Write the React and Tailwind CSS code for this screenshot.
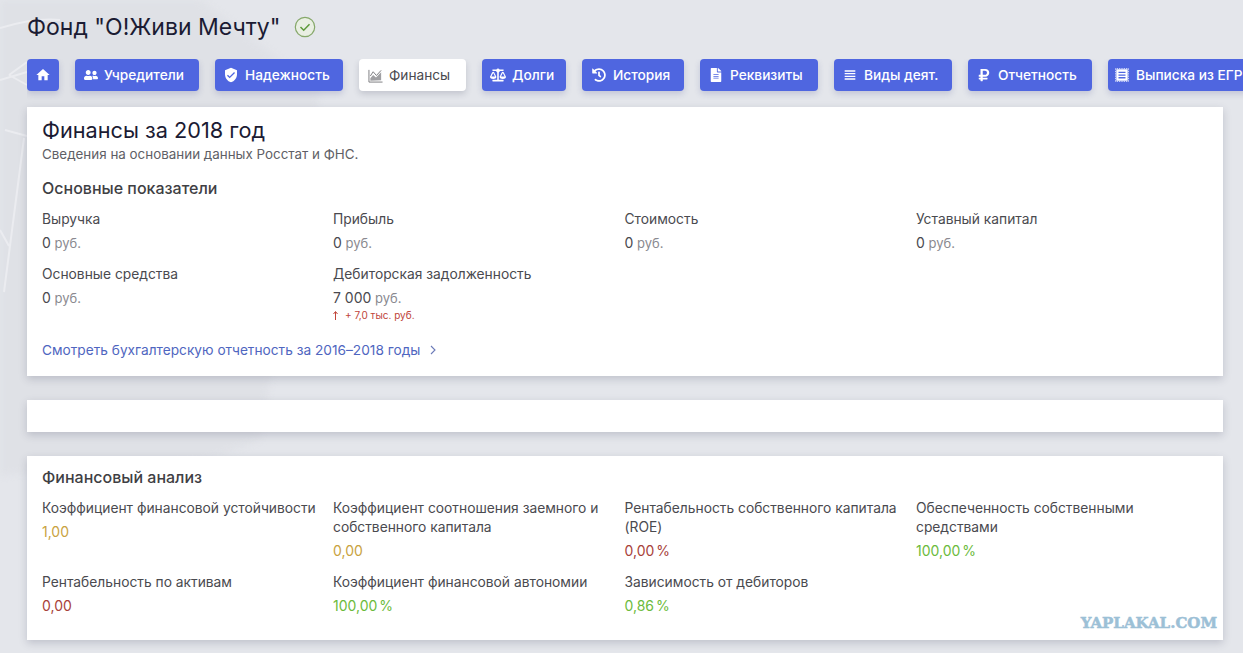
import { FaBalanceScale, FaFileAlt, FaHistory, FaRubleSign, FaUserFriends } from 'react-icons/fa'
import { MdHome, MdVerifiedUser, MdViewHeadline } from 'react-icons/md'

function ChartIcon() {
  return (
    <svg viewBox="0 0 16 16" className="w-[15px] h-[15px] text-[#77777c]" fill="none" stroke="currentColor">
      <path d="M1 2v13h14.500" strokeWidth="1" />
      <path d="M2.500 13.500V11l3-3.500 3 2.500 5.500-5.500v8.500z" fill="currentColor" fillOpacity="0.7" stroke="none" />
      <path d="M2.500 8.500l3-4.500 3.500 4 5-5.500" strokeWidth="1" />
    </svg>
  )
}

function ReceiptIcon() {
  return (
    <svg viewBox="0 0 16 16" className="w-[14px] h-[14px]" fill="currentColor">
      <rect x="0.500" y="0.500" width="15" height="15" fill="none" stroke="currentColor" strokeDasharray="1 1" />
      <path d="M1.500 1.500h13v13h-13zM4 4.200v1.500h8V4.200zm0 3.100v1.500h8V7.300zm0 3.100v1.500h8v-1.500z" fillRule="evenodd" />
    </svg>
  )
}

const tabs = [
  { label: 'Учредители', icon: <FaUserFriends className="w-[14px] h-[14px]" />, box: 'w-[124px] pl-[9px] gap-[6px]' },
  { label: 'Надежность', icon: <MdVerifiedUser className="w-4 h-4" />, box: 'w-[128px] pl-[8px] gap-[6px]' },
  { label: 'Финансы', icon: <ChartIcon />, active: true, box: 'w-[107px] pl-[9px] gap-[6px]' },
  { label: 'Долги', icon: <FaBalanceScale className="w-4 h-4" />, box: 'w-[84px] pl-[8px] gap-[6px]' },
  { label: 'История', icon: <FaHistory className="w-[14px] h-[14px]" />, box: 'w-[102px] pl-[10px] gap-[7px]' },
  { label: 'Реквизиты', icon: <FaFileAlt className="w-[12px] h-[14px]" />, box: 'w-[118px] pl-[10px] gap-[8px]' },
  { label: 'Виды деят.', icon: <MdViewHeadline className="w-4 h-4" />, box: 'w-[118px] pl-[8px] gap-[6px]' },
  { label: 'Отчетность', icon: <FaRubleSign className="w-[12px] h-[14px]" />, box: 'w-[124px] pl-[10px] gap-[8px]' },
  { label: 'Выписка из ЕГРЮЛ', icon: <ReceiptIcon />, box: 'w-[170px] pl-[7px] gap-[7px]' },
]

const mainStats = [
  { title: 'Выручка', value: '0' },
  { title: 'Прибыль', value: '0' },
  { title: 'Стоимость', value: '0' },
  { title: 'Уставный капитал', value: '0' },
  { title: 'Основные средства', value: '0' },
  { title: 'Дебиторская задолженность', value: '7 000', delta: '+ 7,0 тыс. руб.' },
]

const analysis = [
  { title: 'Коэффициент финансовой устойчивости', value: '1,00', color: 'text-[#c9a33f]' },
  { title: 'Коэффициент соотношения заемного и собственного капитала', value: '0,00', color: 'text-[#c9a33f]' },
  { title: 'Рентабельность собственного капитала (ROE)', value: '0,00 %', color: 'text-[#a8423a]' },
  { title: 'Обеспеченность собственными средствами', value: '100,00 %', color: 'text-[#6cbb3c]' },
  { title: 'Рентабельность по активам', value: '0,00', color: 'text-[#a8423a]' },
  { title: 'Коэффициент финансовой автономии', value: '100,00 %', color: 'text-[#6cbb3c]' },
  { title: 'Зависимость от дебиторов', value: '0,86 %', color: 'text-[#6cbb3c]' },
]

function Card({ className, children }) {
  return (
    <div className={`bg-white shadow-[0_3px_8px_rgba(60,64,90,0.22)] ${className}`}>{children}</div>
  )
}

export default function App() {
  return (
    <div className="relative w-[1243px] h-[653px] overflow-hidden bg-[#e4e6eb] text-[13.800px] text-[#4a4a4f] font-['Inter',sans-serif]">
      {/* faint pattern behind the page */}
      <svg className="absolute left-0 top-0 w-[340px] h-[500px]" viewBox="0 0 340 500" fill="none">
        <path d="M0 0H200L320 90 260 440 200 462 0 475z" fill="#dfe1e6" className="blur-[3px]" />
        <g stroke="#ebecf0" strokeWidth="2">
          <path d="M0 28C20 22 40 18 60 20" />
          <path d="M9 75L27 62M9 75L27 85M0 80L27 72" />
          <path d="M5 130L27 136M24 138L4 292M0 230L9 246" />
        </g>
      </svg>

      <div className="relative pl-[27px] w-[1216px]">
        <div className="flex items-center gap-[14px] h-[52px] pt-[2px]">
          <h1 className="text-[23px] leading-8 text-[#1b1b33]">Фонд "О!Живи Мечту"</h1>
          <svg viewBox="0 0 22 22" className="w-[22px] h-[22px]" fill="none">
            <circle cx="11" cy="11" r="9.700" fill="#e9efe3" stroke="#86a86a" strokeWidth="1.200" />
            <path d="M6.500 11l3.200 3.200 5.800-6" stroke="#5d9a3a" strokeWidth="1.500" />
          </svg>
        </div>

        <div className="flex gap-4 mt-[7px] w-[1216px] overflow-hidden h-[48px] shrink-0">
          <div className="flex items-center justify-center w-8 h-8 shrink-0 rounded bg-[#4f66e0] text-white shadow-[0_3px_6px_rgba(60,70,140,0.2)]">
            <MdHome className="w-4 h-4" />
          </div>
          {tabs.map((tab) => (
            <div
              key={tab.label}
              className={`flex items-center h-8 shrink-0 rounded whitespace-nowrap text-[13.700px] font-medium ${tab.box} ${tab.active ? 'bg-white text-[#4a4a4f] font-normal shadow-[0_3px_6px_rgba(60,64,90,0.2)]' : 'bg-[#4f66e0] text-white shadow-[0_3px_6px_rgba(60,70,140,0.2)]'}`}
            >
              {tab.icon}
              {tab.label}
            </div>
          ))}
        </div>

        <div className="flex flex-col gap-6 w-[1196px]">
          <Card className="h-[269px] px-[15px] pt-[9px]">
            <h2 className="text-[21.700px] leading-7 text-[#1b1b33]">Финансы за 2018 год</h2>
            <p className="mt-[1px] text-[13.400px] leading-[19px] text-[#5f5f66]">Сведения на основании данных Росстат и ФНС.</p>
            <h3 className="mt-[14px] text-[16px] leading-5 font-medium text-[#3f3f44]">Основные показатели</h3>
            <div className="grid grid-cols-[291px_291.500px_291.500px_1fr] mt-[12px]">
              {mainStats.map((stat) => (
                <div key={stat.title} className="h-[55px]">
                  <div className="leading-[18px]">{stat.title}</div>
                  <div className="mt-[6px] text-[13px] leading-[18px] text-[#8a8a90]">
                    <span className="text-[14px] text-[#4a4a4f]">{stat.value}</span> руб.
                  </div>
                  {stat.delta && (
                    <div className="flex items-center gap-[7px] mt-[1px] text-[10px] leading-[14px] text-[#c0453a]">
                      <svg viewBox="0 0 5 9" className="w-[5px] h-[9px]" fill="none" stroke="currentColor">
                        <path d="M2.500 9V1M0.500 3L2.500 0.500 4.500 3" strokeWidth="1" />
                      </svg>
                      {stat.delta}
                    </div>
                  )}
                </div>
              ))}
            </div>
            <a className="flex items-center gap-[9px] mt-[20px] text-[13.700px] leading-5 text-[#4f66c0]">
              Смотреть бухгалтерскую отчетность за 2016–2018 годы
              <svg viewBox="0 0 8 10" className="w-2 h-[10px]" fill="none" stroke="#6b7ab8" strokeWidth="1.100">
                <path d="M2 1l4 4-4 4" />
              </svg>
            </a>
          </Card>

          <Card className="h-8" />

          <Card className="h-[184px] px-[15px] pt-[11px]">
            <h3 className="text-[16px] leading-5 font-medium text-[#3f3f44]">Финансовый анализ</h3>
            <div className="grid grid-cols-[291px_291.500px_291.500px_1fr] mt-[12px]">
              {analysis.map((item) => (
                <div key={item.title} className="pr-4 mb-[12px]">
                  <div className="leading-[19px]">{item.title}</div>
                  <div className={`mt-[4px] text-[14px] leading-[20px] [word-spacing:-2px] ${item.color}`}>{item.value}</div>
                </div>
              ))}
            </div>
          </Card>
        </div>
      </div>

      <div className="absolute right-[26px] top-[614px] text-[15px] leading-[18px] font-bold text-[#9cc0d6] [-webkit-text-stroke:0.5px_#9cc0d6] font-['DejaVu_Serif',serif]">
        YAPLAKAL.COM
      </div>
    </div>
  )
}
